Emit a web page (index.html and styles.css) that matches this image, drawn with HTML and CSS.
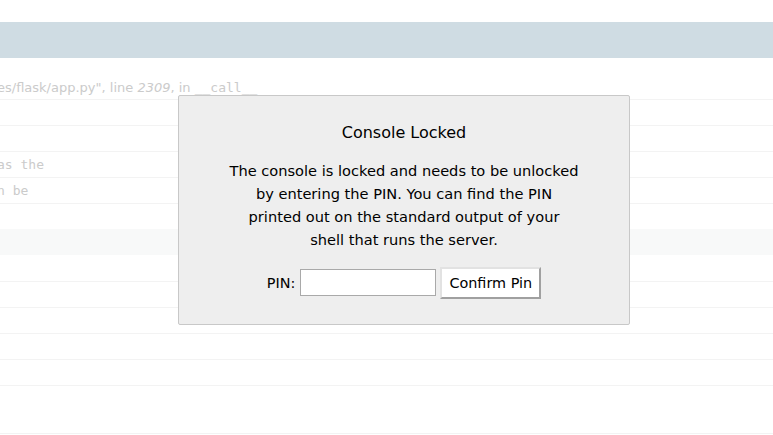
FILE: index.html
```
<!DOCTYPE html>
<html>
<head>
<meta charset="utf-8">
<title>Console Locked</title>
<link rel="stylesheet" href="styles.css">
</head>
<body>
<div class="page">
  <div class="topgap"></div>
  <div class="header"></div>
  <div class="frame-title">es/flask/app.py", line <em>2309</em>, in <code>__call__</code></div>
  <div class="row"></div>
  <div class="row"></div>
  <div class="row"><pre>as the</pre></div>
  <div class="row"><pre>n be</pre></div>
  <div class="row"></div>
  <div class="row band"></div>
  <div class="row plain"></div>
  <div class="row"></div>
  <div class="row"></div>
  <div class="row"></div>
  <div class="row"></div>
  <div class="row tall"></div>
  <div class="row"></div>
</div>
<div class="pin-prompt">
  <div class="inner">
    <h3>Console Locked</h3>
    <p>The console is locked and needs to be unlocked<br>by entering the PIN. You can find the PIN<br>printed out on the standard output of your<br>shell that runs the server.</p>
    <form class="pin-form">
      <label class="pin-label">PIN:</label>
      <input class="pin-input" type="text" name="pin">
      <button class="pin-btn" type="button">Confirm Pin</button>
    </form>
  </div>
</div>
</body>
</html>
```
FILE: styles.css
```
html, body {
  margin: 0;
  padding: 0;
  background: #ffffff;
  overflow: hidden;
  height: 100%;
}
body {
  position: relative;
  font-family: "DejaVu Sans", Verdana, sans-serif;
}
.page {
  width: 100%;
}
.topgap {
  height: 22px;
}
.header {
  height: 36px;
  background: #cfdce3;
}
.frame-title {
  padding: 22px 0 3px 0;
  line-height: 16px;
  font-size: 13px;
  color: #cbcbcb;
  white-space: nowrap;
  text-indent: -3px;
}
.frame-title em {
  font-style: italic;
}
.frame-title code {
  font-family: "DejaVu Sans Mono", monospace;
  font-size: 13px;
}
.row {
  height: 25px;
  border-top: 1px solid #f3f3f3;
}
.row pre {
  margin: 0;
  font-family: "DejaVu Sans Mono", monospace;
  font-size: 13px;
  line-height: 25px;
  color: #cbcbcb;
  text-indent: -3px;
}
.row.band {
  background: #f8f9f9;
  border-top-color: #f8f9f9;
}
.row.plain {
  border-top-color: #ffffff;
}
.row.tall {
  height: 47px;
}
.pin-prompt {
  position: absolute;
  top: 0;
  left: 0;
  right: 0;
  bottom: 0;
  padding: 95px 0 0 35px;
}
.inner {
  width: 350px;
  margin: 0 auto;
  padding: 10px 50px 10px 50px;
  background: #eeeeee;
  border: 1px solid #c8c8c8;
  border-radius: 2px;
  text-align: center;
  color: #000;
}
.inner h3 {
  margin: 17px 0 0 0;
  font-size: 16px;
  font-weight: normal;
  line-height: 20px;
}
.inner p {
  margin: 15.5px 0 0 0;
  font-size: 14.6px;
  line-height: 23.3px;
  white-space: nowrap;
}
.pin-form {
  margin: 15px 0 15px 0;
  display: flex;
  justify-content: center;
  align-items: center;
  font-size: 14.4px;
}
.pin-label {
  margin-right: 5px;
}
.pin-input {
  box-sizing: border-box;
  width: 136px;
  height: 27px;
  margin: 0 4px 0 0;
  border: 1px solid #a9a9a9;
  background: #fff;
  padding: 2px 4px;
  font-family: inherit;
  font-size: 14.4px;
  outline: none;
}
.pin-btn {
  box-sizing: border-box;
  width: 101px;
  height: 32px;
  margin: 0;
  padding: 0;
  background: #fff;
  border-style: solid;
  border-width: 2px;
  border-color: #e2e2e2 #a0a0a0 #a0a0a0 #e2e2e2;
  font-family: "DejaVu Sans", Verdana, sans-serif;
  font-size: 14.4px;
  color: #000;
}
```
